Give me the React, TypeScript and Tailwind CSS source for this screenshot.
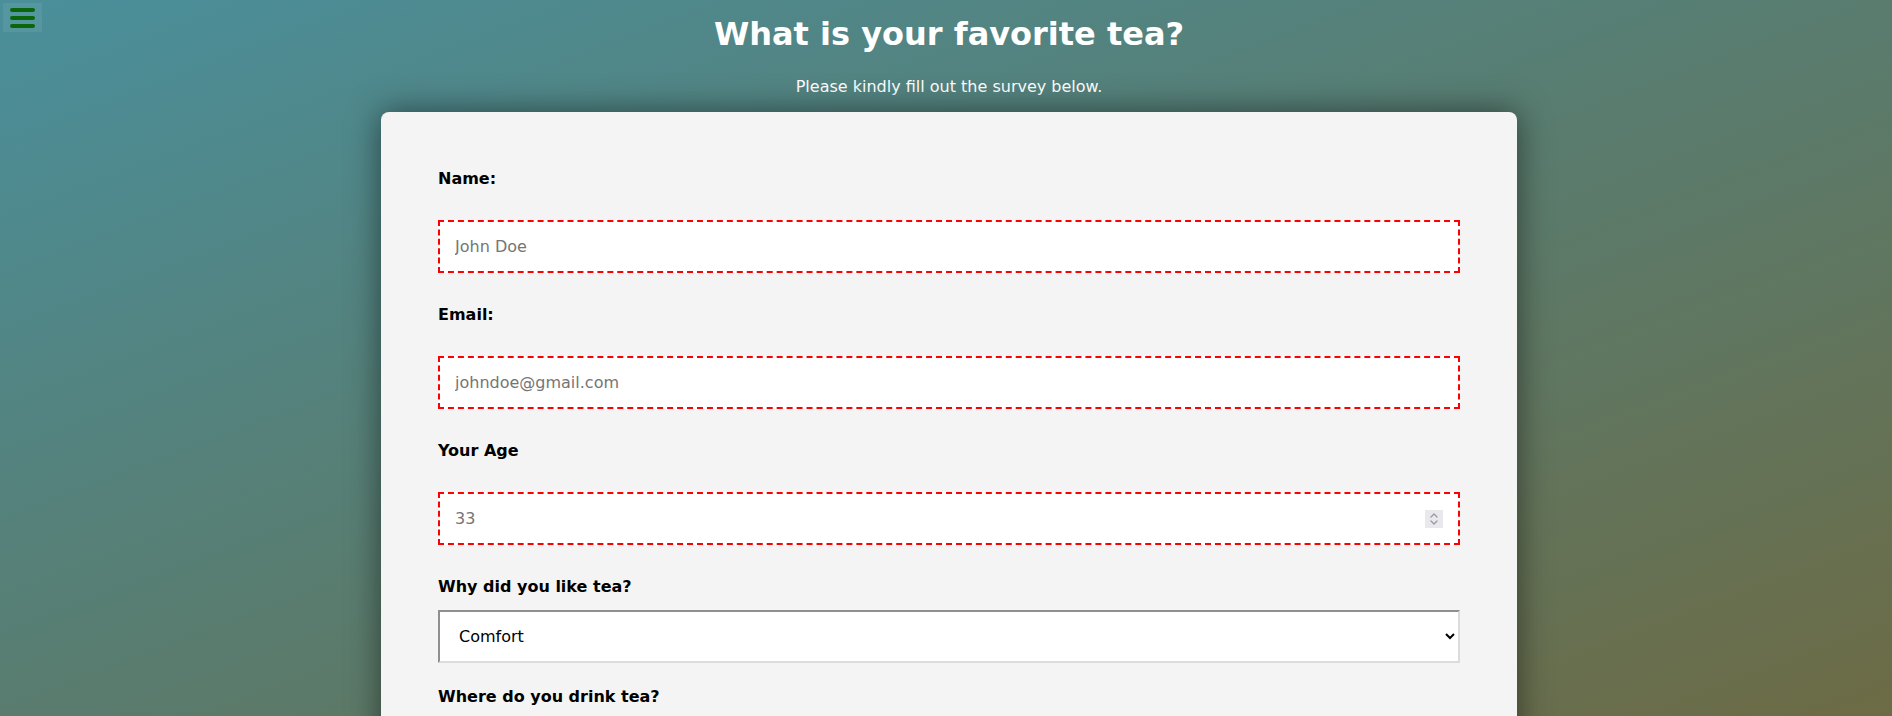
import { useState } from 'react'

export default function App() {
  const [reason, setReason] = useState('comfort')

  return (
    <div className="h-screen overflow-hidden bg-[linear-gradient(to_bottom_right,#4a8f9b,#597c6f,#6c6b45)] font-['DejaVu_Sans',sans-serif] relative">
      <button className="absolute left-[3px] top-[3px] w-[39px] h-[29px] bg-[rgba(255,255,255,0.07)] flex flex-col items-center justify-center gap-[4px]">
        <span className="block w-[25px] h-[4px] rounded-full bg-[#0a660a]" />
        <span className="block w-[25px] h-[4px] rounded-full bg-[#0a660a]" />
        <span className="block w-[25px] h-[4px] rounded-full bg-[#0a660a]" />
      </button>

      <div className="pl-[6px] pt-[16px] flex flex-col items-center">
        <h1 className="text-[32px] leading-[37px] font-bold text-white">What is your favorite tea?</h1>
        <p className="mt-[24px] text-[16px] leading-[19px] text-white">Please kindly fill out the survey below.</p>

        <form className="mt-[15.5px] w-[1136px] bg-[#f4f4f4] rounded-lg shadow-[0_0_32px_rgba(0,0,0,0.5)] p-[57px] text-black">
          <label htmlFor="name" className="block font-bold text-[16px] leading-[19px]">Name:</label>
          <input
            id="name"
            type="text"
            placeholder="John Doe"
            className="block w-full h-[53px] my-[32px] px-[15px] bg-white border-2 border-dashed border-[#ff0000] text-[16px] placeholder:text-[#757575] outline-none"
          />

          <label htmlFor="email" className="block font-bold text-[16px] leading-[19px]">Email:</label>
          <input
            id="email"
            type="email"
            placeholder="johndoe@gmail.com"
            className="block w-full h-[53px] my-[32px] px-[15px] bg-white border-2 border-dashed border-[#ff0000] text-[16px] placeholder:text-[#757575] outline-none"
          />

          <label htmlFor="age" className="block font-bold text-[16px] leading-[19px]">Your Age</label>
          <div className="relative my-[32px]">
            <input
              id="age"
              type="text"
              inputMode="numeric"
              placeholder="33"
              className="block w-full h-[53px] px-[15px] bg-white border-2 border-dashed border-[#ff0000] text-[16px] placeholder:text-[#757575] outline-none"
            />
            {/* spin buttons */}
            <div className="absolute right-[17px] top-[18px] w-[18px] h-[18px] bg-[#e9e9ed] flex flex-col items-center justify-center">
              <svg width="10" height="14" viewBox="0 0 10 14" fill="none" stroke="#9a9aa2" strokeWidth="1.4" strokeLinecap="round" strokeLinejoin="round">
                <path d="M2 5 L5 2 L8 5" />
                <path d="M2 9 L5 12 L8 9" />
              </svg>
            </div>
          </div>

          <label htmlFor="reason" className="block font-bold text-[16px] leading-[19px]">Why did you like tea?</label>
          <select
            id="reason"
            value={reason}
            onChange={(e) => setReason(e.target.value)}
            className="block w-full h-[53px] mt-[14px] px-[15px] bg-white border-2 border-t-[#8f8f8f] border-l-[#8f8f8f] border-b-[#dcdcdc] border-r-[#dcdcdc] text-[16px] text-black"
          >
            <option value="comfort">Comfort</option>
            <option value="health">Health</option>
            <option value="taste">Taste</option>
            <option value="energy">Energy</option>
          </select>

          <p className="mt-[24px] font-bold text-[16px] leading-[19px]">Where do you drink tea?</p>
        </form>
      </div>
    </div>
  )
}
